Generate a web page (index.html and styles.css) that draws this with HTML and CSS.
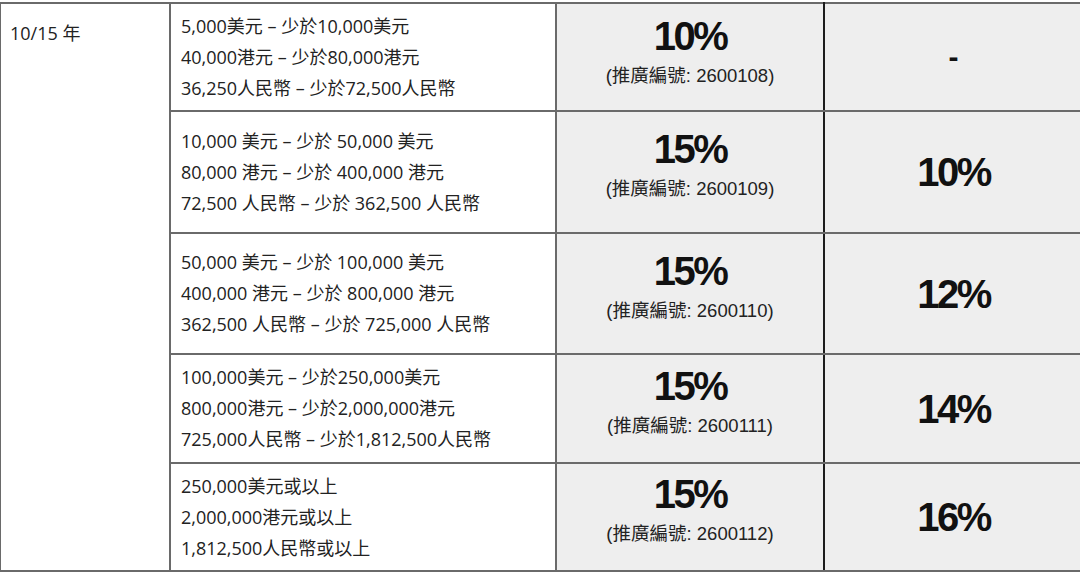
FILE: index.html
```html
<!DOCTYPE html>
<html lang="zh-Hant">
<head>
<meta charset="utf-8">
<title>優惠表</title>
<link rel="stylesheet" href="styles.css">
</head>
<body>
<table class="rates">
  <colgroup>
    <col class="c-term">
    <col class="c-amount">
    <col class="c-promo">
    <col class="c-extra">
  </colgroup>
  <tbody>
    <tr class="r1">
      <td class="term" rowspan="5">10/15 年</td>
      <td class="amount">5,000美元 – 少於10,000美元<br>40,000港元 – 少於80,000港元<br>36,250人民幣 – 少於72,500人民幣</td>
      <td class="promo"><div class="big">10%</div><div class="code">(推廣編號: 2600108)</div></td>
      <td class="extra"><div class="dash">-</div></td>
    </tr>
    <tr class="r2">
      <td class="amount">10,000 美元 – 少於 50,000 美元<br>80,000 港元 – 少於 400,000 港元<br>72,500 人民幣 – 少於 362,500 人民幣</td>
      <td class="promo"><div class="big">15%</div><div class="code">(推廣編號: 2600109)</div></td>
      <td class="extra"><div class="big">10%</div></td>
    </tr>
    <tr class="r3">
      <td class="amount">50,000 美元 – 少於 100,000 美元<br>400,000 港元 – 少於 800,000 港元<br>362,500 人民幣 – 少於 725,000 人民幣</td>
      <td class="promo"><div class="big">15%</div><div class="code">(推廣編號: 2600110)</div></td>
      <td class="extra"><div class="big">12%</div></td>
    </tr>
    <tr class="r4">
      <td class="amount">100,000美元 – 少於250,000美元<br>800,000港元 – 少於2,000,000港元<br>725,000人民幣 – 少於1,812,500人民幣</td>
      <td class="promo"><div class="big">15%</div><div class="code">(推廣編號: 2600111)</div></td>
      <td class="extra"><div class="big">14%</div></td>
    </tr>
    <tr class="r5">
      <td class="amount">250,000美元或以上<br>2,000,000港元或以上<br>1,812,500人民幣或以上</td>
      <td class="promo"><div class="big">15%</div><div class="code">(推廣編號: 2600112)</div></td>
      <td class="extra"><div class="big">16%</div></td>
    </tr>
  </tbody>
</table>
</body>
</html>
```

FILE: styles.css
```css
html, body {
  margin: 0;
  padding: 0;
  background: #ffffff;
}

body {
  overflow: hidden;
  font-family: "Open Sans", "Noto Sans CJK TC", sans-serif;
  color: #1a1a1a;
}

.rates {
  border-collapse: collapse;
  table-layout: fixed;
  width: 1083px;
  margin: 2px 0 0 -1px;
}

.c-term { width: 170px; }
.c-amount { width: 386px; }
.c-promo { width: 268px; }
.c-extra { width: 259px; }

.rates td {
  border: 2px solid #6a6a6a;
  padding: 0;
}

.r1 { height: 108px; }
.r2 { height: 122px; }
.r3 { height: 121px; }
.r4 { height: 109px; }
.r5 { height: 108px; }

.term {
  vertical-align: top;
  padding: 16px 0 0 9px !important;
  font-size: 18px;
  line-height: 26px;
  color: #222222;
}

.amount {
  vertical-align: middle;
  padding: 0 0 0 10px !important;
  font-size: 18px;
  line-height: 31px;
  white-space: nowrap;
  color: #222222;
}

.promo, .extra {
  background: #eeeeee;
  text-align: center;
  vertical-align: middle;
}

.promo {
  padding-bottom: 12px !important;
  border-right-color: #1c1c1c !important;
}

.big {
  font-family: "Liberation Sans", "Noto Sans CJK TC", sans-serif;
  font-weight: 700;
  font-size: 40px;
  line-height: 44px;
  letter-spacing: -2.5px;
  color: #111111;
}

.r2 .promo .big, .r3 .promo .big, .r4 .promo .big, .r5 .promo .big {
  margin-top: -4px;
}

.code {
  margin-top: 6px;
  font-family: "Liberation Sans", "Noto Sans CJK TC", sans-serif;
  font-size: 18.5px;
  line-height: 24px;
  color: #222222;
}

.dash {
  font-family: "Liberation Sans", sans-serif;
  font-weight: 700;
  font-size: 30px;
  line-height: 30px;
  color: #111111;
}
```
